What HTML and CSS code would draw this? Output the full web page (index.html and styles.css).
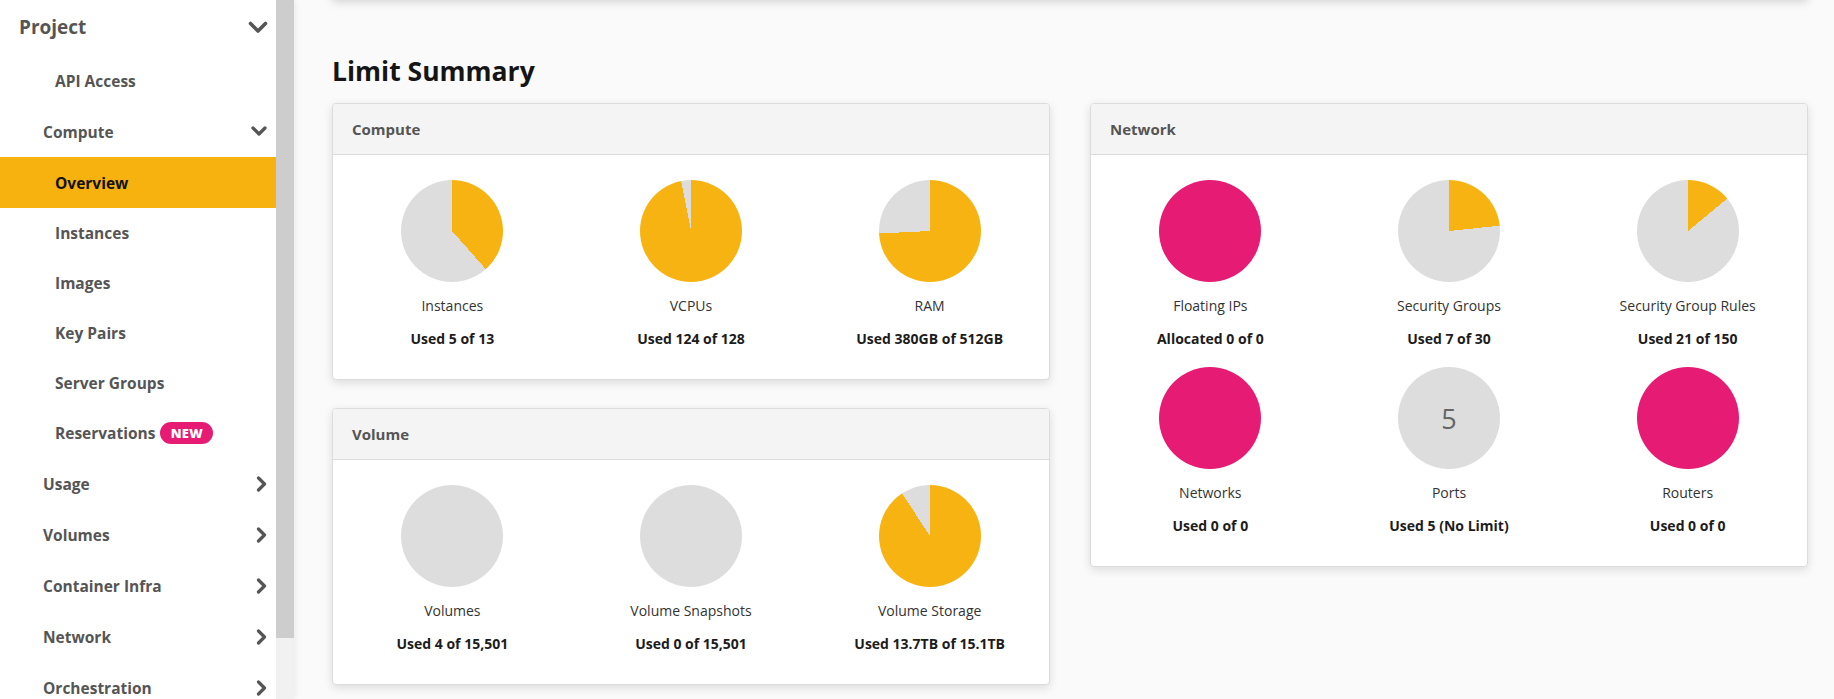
FILE: index.html
```html
<!DOCTYPE html>
<html lang="en">
<head>
<meta charset="utf-8">
<title>Overview - Limit Summary</title>
<link rel="stylesheet" href="styles.css">
</head>
<body>
<aside class="sidebar">
  <nav class="nav">
    <div class="nav-project">
      <span>Project</span>
      <svg class="chev-down-lg" viewBox="0 0 20 13" width="20" height="13"><path d="M2.5 2.5 L10 10 L17.5 2.5" fill="none" stroke="#555" stroke-width="3.6" stroke-linecap="round" stroke-linejoin="round"/></svg>
    </div>
    <a class="nav-sub">API Access</a>
    <div class="nav-top">
      <span>Compute</span>
      <svg class="chev-down" viewBox="0 0 16 11" width="16" height="11"><path d="M2 2 L8 8 L14 2" fill="none" stroke="#555" stroke-width="3.2" stroke-linecap="round" stroke-linejoin="round"/></svg>
    </div>
    <a class="nav-sub active">Overview</a>
    <a class="nav-sub">Instances</a>
    <a class="nav-sub">Images</a>
    <a class="nav-sub">Key Pairs</a>
    <a class="nav-sub">Server Groups</a>
    <a class="nav-sub">Reservations <span class="badge">NEW</span></a>
    <div class="nav-top"><span>Usage</span><svg class="chev-right" viewBox="0 0 11 16" width="11" height="16"><path d="M2.5 2 L8.5 8 L2.5 14" fill="none" stroke="#555" stroke-width="3.2" stroke-linecap="round" stroke-linejoin="round"/></svg></div>
    <div class="nav-top"><span>Volumes</span><svg class="chev-right" viewBox="0 0 11 16" width="11" height="16"><path d="M2.5 2 L8.5 8 L2.5 14" fill="none" stroke="#555" stroke-width="3.2" stroke-linecap="round" stroke-linejoin="round"/></svg></div>
    <div class="nav-top"><span>Container Infra</span><svg class="chev-right" viewBox="0 0 11 16" width="11" height="16"><path d="M2.5 2 L8.5 8 L2.5 14" fill="none" stroke="#555" stroke-width="3.2" stroke-linecap="round" stroke-linejoin="round"/></svg></div>
    <div class="nav-top"><span>Network</span><svg class="chev-right" viewBox="0 0 11 16" width="11" height="16"><path d="M2.5 2 L8.5 8 L2.5 14" fill="none" stroke="#555" stroke-width="3.2" stroke-linecap="round" stroke-linejoin="round"/></svg></div>
    <div class="nav-top"><span>Orchestration</span><svg class="chev-right" viewBox="0 0 11 16" width="11" height="16"><path d="M2.5 2 L8.5 8 L2.5 14" fill="none" stroke="#555" stroke-width="3.2" stroke-linecap="round" stroke-linejoin="round"/></svg></div>
  </nav>
  <div class="scrollbar"><div class="thumb"></div></div>
</aside>

<main class="main">
  <div class="top-card"></div>
  <h2 class="page-title">Limit Summary</h2>
  <div class="cards">
    <div class="col">
      <section class="card">
        <header class="card-head">Compute</header>
        <div class="card-body">
          <div class="item"><div class="pie" style="--p:38.46%"></div><div class="label">Instances</div><div class="value">Used 5 of 13</div></div>
          <div class="item"><div class="pie" style="--p:96.88%"></div><div class="label">VCPUs</div><div class="value">Used 124 of 128</div></div>
          <div class="item"><div class="pie" style="--p:74.22%"></div><div class="label">RAM</div><div class="value">Used 380GB of 512GB</div></div>
        </div>
      </section>
      <section class="card">
        <header class="card-head">Volume</header>
        <div class="card-body">
          <div class="item"><div class="pie" style="--p:0.03%"></div><div class="label">Volumes</div><div class="value">Used 4 of 15,501</div></div>
          <div class="item"><div class="pie" style="--p:0%"></div><div class="label">Volume Snapshots</div><div class="value">Used 0 of 15,501</div></div>
          <div class="item"><div class="pie" style="--p:90.73%"></div><div class="label">Volume Storage</div><div class="value">Used 13.7TB of 15.1TB</div></div>
        </div>
      </section>
    </div>
    <div class="col">
      <section class="card">
        <header class="card-head">Network</header>
        <div class="card-body">
          <div class="item"><div class="pie pie-alert"></div><div class="label">Floating IPs</div><div class="value">Allocated 0 of 0</div></div>
          <div class="item"><div class="pie" style="--p:23.33%"></div><div class="label">Security Groups</div><div class="value">Used 7 of 30</div></div>
          <div class="item"><div class="pie" style="--p:14%"></div><div class="label">Security Group Rules</div><div class="value">Used 21 of 150</div></div>
          <div class="item"><div class="pie pie-alert"></div><div class="label">Networks</div><div class="value">Used 0 of 0</div></div>
          <div class="item"><div class="pie pie-count"><span>5</span></div><div class="label">Ports</div><div class="value">Used 5 (No Limit)</div></div>
          <div class="item"><div class="pie pie-alert"></div><div class="label">Routers</div><div class="value">Used 0 of 0</div></div>
        </div>
      </section>
    </div>
  </div>
</main>
</body>
</html>
```

FILE: styles.css
```css
* { box-sizing: border-box; }

html, body {
  margin: 0;
  height: 699px;
  overflow: hidden;
}

body {
  display: flex;
  font-family: "Open Sans", "Lato", sans-serif;
  background: #fafafa;
  color: #222;
}

/* Sidebar */
.sidebar {
  display: flex;
  width: 294px;
  flex: 0 0 294px;
  height: 699px;
  box-shadow: 2px 0 6px rgba(0, 0, 0, 0.06);
  position: relative;
  z-index: 1;
}

.nav {
  width: 276px;
  background: #fff;
  display: flex;
  flex-direction: column;
  overflow: hidden;
}

.nav > * {
  flex-shrink: 0;
}

.scrollbar {
  width: 18px;
  background: #f1f1f1;
}

.thumb {
  height: 638px;
  background: #cdcdcd;
}

.nav-project {
  height: 56px;
  display: flex;
  align-items: center;
  justify-content: space-between;
  padding: 0 8px 2px 19px;
  font-size: 19px;
  font-weight: 700;
  color: #555;
}

.nav-top {
  height: 51px;
  display: flex;
  align-items: center;
  justify-content: space-between;
  padding: 0 9px 0 43px;
  font-size: 15.5px;
  font-weight: 700;
  color: #555;
}

.nav-sub {
  height: 50px;
  display: flex;
  align-items: center;
  padding-left: 55px;
  font-size: 15.5px;
  font-weight: 700;
  color: #555;
}

.nav-sub.active {
  background: #f7b210;
  color: #111;
  height: 51px;
}

.chev-down-lg { display: block; }
.chev-down { display: block; }
.chev-right { display: block; }

.badge {
  display: inline-flex;
  align-items: center;
  justify-content: center;
  width: 53px;
  height: 22px;
  margin-left: 5px;
  border-radius: 11px;
  background: #e51b74;
  color: #fff;
  font-size: 13px;
  font-weight: 800;
  letter-spacing: 0.3px;
}

/* Main */
.main {
  flex: 1;
  padding: 0 26px 0 38px;
  background: #fafafa;
}

.top-card {
  height: 40px;
  margin-top: -40px;
  background: #fff;
  border-radius: 4px;
  box-shadow: 0 2px 10px rgba(0, 0, 0, 0.16);
}

.page-title {
  margin: 54px 0 14px;
  font-size: 26.5px;
  line-height: 35px;
  font-weight: 700;
  color: #151515;
}

.cards {
  display: grid;
  grid-template-columns: 1fr 1fr;
  column-gap: 40px;
  align-items: start;
}

.col {
  display: flex;
  flex-direction: column;
  gap: 28px;
}

.card {
  background: #fff;
  border: 1px solid #dcdcdc;
  border-radius: 4px;
  box-shadow: 0 3px 10px rgba(0, 0, 0, 0.12);
  overflow: hidden;
}

.card-head {
  height: 51px;
  line-height: 50px;
  padding-left: 19px;
  background: #f4f4f4;
  border-bottom: 1px solid #dcdcdc;
  font-size: 15px;
  font-weight: 700;
  color: #555;
}

.card-body {
  display: grid;
  grid-template-columns: repeat(3, 1fr);
  row-gap: 18px;
  padding: 25px 0 30px;
}

.item {
  display: flex;
  flex-direction: column;
  align-items: center;
}

.pie {
  width: 102px;
  height: 102px;
  border-radius: 50%;
  background: conic-gradient(#f7b312 0 var(--p), #dddddd var(--p) 100%);
}

.pie-alert {
  background: #e51b74;
}

.pie-count {
  background: #dddddd;
  display: flex;
  align-items: center;
  justify-content: center;
  font-size: 27px;
  color: #666;
}

.label {
  margin-top: 14px;
  line-height: 20px;
  font-size: 14px;
  color: #333;
}

.value {
  margin-top: 13px;
  line-height: 20px;
  font-size: 14px;
  font-weight: 700;
  color: #1c1c1c;
}
```
